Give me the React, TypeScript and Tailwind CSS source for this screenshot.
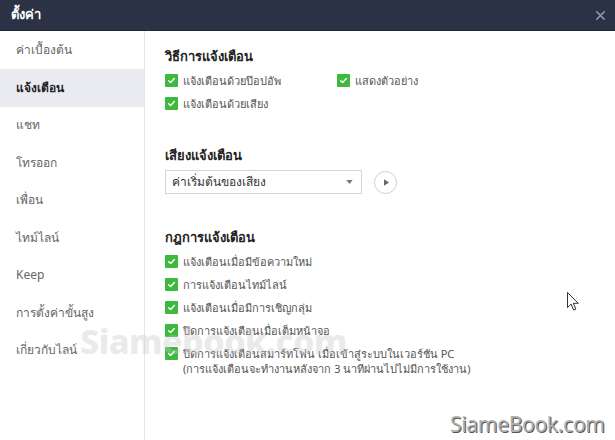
import React from 'react';

const menu = [
  'ค่าเบื้องต้น',
  'แจ้งเตือน',
  'แชท',
  'โทรออก',
  'เพื่อน',
  'ไทม์ไลน์',
  'Keep',
  'การตั้งค่าขั้นสูง',
  'เกี่ยวกับไลน์',
];

function Check() {
  return (
    <span className="flex h-[13px] w-[13px] shrink-0 items-center justify-center rounded-[1px] bg-[#3dba3d]">
      <svg viewBox="0 0 12 12" className="h-[9px] w-[9px]" fill="none">
        <path d="M2.2 6.3 4.8 8.7 9.8 3.3" stroke="#fff" strokeWidth={1.9} strokeLinecap="round" strokeLinejoin="round" />
      </svg>
    </span>
  );
}

function Row({ label, sub }: { label: string; sub?: string }) {
  if (sub) {
    return (
      <div className="flex items-start gap-[5px] pt-[4px]">
        <span className="mt-[1px]">
          <Check />
        </span>
        <div className="flex flex-col text-[11px] leading-[15px] text-[#555]">
          <span>{label}</span>
          <span className="whitespace-nowrap">{sub}</span>
        </div>
      </div>
    );
  }
  return (
    <div className="flex h-[23px] items-center gap-[5px]">
      <Check />
      <span className="whitespace-nowrap text-[11px] leading-[15px] text-[#555]">{label}</span>
    </div>
  );
}

export default function App() {
  return (
    <div
      className="relative h-[440px] w-[615px] overflow-hidden bg-white"
      style={{ fontFamily: '"Noto Sans", "Liberation Sans", sans-serif' }}
    >
      <div className="flex h-[31px] items-center justify-between border-b border-[#1f2535] bg-[#2b3245] pl-[11px] pr-[9px]">
        <span className="text-[13px] font-semibold text-white">ตั้งค่า</span>
        <svg viewBox="0 0 12 12" className="h-[11px] w-[11px]" fill="none">
          <path d="M1.5 1.5 10.5 10.5M10.5 1.5 1.5 10.5" stroke="#8c93a6" strokeWidth={1.6} />
        </svg>
      </div>

      <div className="flex h-[409px]">
        <div className="w-[145px] shrink-0 border-r border-[#e6e6e6] pt-[0.5px]">
          {menu.map((m, i) => (
            <div
              key={m}
              className={
                i === 1
                  ? 'flex h-[37.5px] items-center bg-[#e9ebf1] pl-[16px] text-[12px] font-semibold text-[#222]'
                  : 'flex h-[37.5px] items-center pl-[16px] text-[12px] text-[#666]'
              }
            >
              {m}
            </div>
          ))}
        </div>

        <div className="flex-1 pl-[20px] pt-[15px]">
          <h3 className="h-[20px] text-[13px] font-semibold leading-[20px] text-[#222]">วิธีการแจ้งเตือน</h3>
          <div className="mt-[3px] grid grid-cols-[172px_1fr]">
            <Row label="แจ้งเตือนด้วยป๊อปอัพ" />
            <Row label="แสดงตัวอย่าง" />
            <Row label="แจ้งเตือนด้วยเสียง" />
          </div>

          <h3 className="mt-[30px] h-[20px] text-[13px] font-semibold leading-[20px] text-[#222]">เสียงแจ้งเตือน</h3>
          <div className="mt-[5px] flex items-center gap-[12px]">
            <div className="flex h-[24px] w-[197px] items-center justify-between border border-[#d4d4d4] pl-[6px] pr-[8px]">
              <span className="text-[12px] text-[#333]">ค่าเริ่มต้นของเสียง</span>
              <svg viewBox="0 0 8 5" className="h-[4px] w-[7px]">
                <path d="M0 0h8L4 5z" fill="#777" />
              </svg>
            </div>
            <div className="flex h-[23px] w-[23px] items-center justify-center rounded-full border border-[#d0d0d0]">
              <svg viewBox="0 0 6 8" className="ml-[1px] h-[7px] w-[5px]">
                <path d="M0 0l6 4-6 4z" fill="#666" />
              </svg>
            </div>
          </div>

          <h3 className="mt-[33px] h-[20px] text-[13px] font-semibold leading-[20px] text-[#222]">กฎการแจ้งเตือน</h3>
          <div className="mt-[3px] flex flex-col">
            <Row label="แจ้งเตือนเมื่อมีข้อความใหม่" />
            <Row label="การแจ้งเตือนไทม์ไลน์" />
            <Row label="แจ้งเตือนเมื่อมีการเชิญกลุ่ม" />
            <Row label="ปิดการแจ้งเตือนเมื่อเต็มหน้าจอ" />
            <Row
              label="ปิดการแจ้งเตือนสมาร์ทโฟน เมื่อเข้าสู่ระบบในเวอร์ชัน PC"
              sub="(การแจ้งเตือนจะทำงานหลังจาก 3 นาทีผ่านไปไม่มีการใช้งาน)"
            />
          </div>
        </div>
      </div>

      {/* faint watermark */}
      <div className="pointer-events-none absolute left-[80px] top-[324px] text-[34px] font-extrabold leading-none tracking-[-0.5px] text-[#c4c4c4] opacity-35">
        Siamebook.com
      </div>

      {/* cursor */}
      <svg className="absolute left-[567px] top-[292px] h-[19px] w-[12px]" viewBox="0 0 12 19">
        <path d="M0.5 0.5v15l3.6-3.4 2.6 6 2.2-1-2.6-5.8h5z" fill="#fff" stroke="#333" strokeWidth={1} strokeLinejoin="round" />
      </svg>

      {/* bottom watermark */}
      <div
        className="absolute left-[450px] top-[410px] text-[21px] leading-[28px] tracking-[-0.3px] text-[#b0b0b0]"
        style={{ textShadow: '1px 1px 0 #555, -1px -1px 0 #fff' }}
      >
        SiameBook.com
      </div>
    </div>
  );
}
